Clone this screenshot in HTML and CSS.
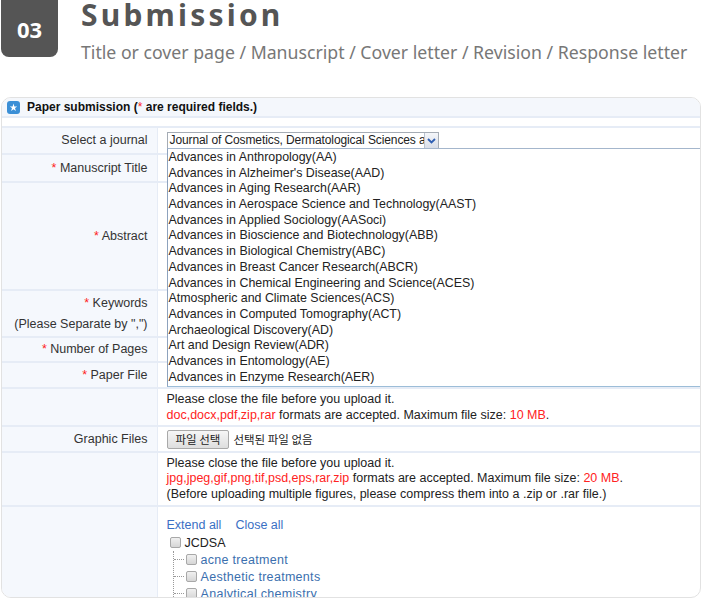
FILE: index.html
```html
<!DOCTYPE html>
<html lang="en">
<head>
    <meta charset="UTF-8">
    <title>Submission</title>
    <link rel="stylesheet" href="styles.css">
</head>
<body>
    <header class="step-head">
        <div class="step-num">03</div>
        <div class="step-text">
            <h1 class="step-title">Submission</h1>
            <p class="step-sub">Title or cover page / Manuscript / Cover letter / Revision / Response letter</p>
        </div>
    </header>

    <section class="panel">
        <div class="panel-title">
            <span class="star-icon">
                <svg width="13" height="13" viewBox="0 0 13 13">
                    <rect x="0" y="0" width="13" height="13" rx="3" fill="#3b8fd6"/>
                    <polygon points="6.5,2.6 7.4,5.4 10.3,5.4 8,7.1 8.9,9.9 6.5,8.2 4.1,9.9 5,7.1 2.7,5.4 5.6,5.4" fill="#fff"/>
                </svg>
            </span>
            <span>Paper submission (<span class="req">*</span> are required fields.)</span>
        </div>

        <table class="form-table">
            <tr class="r-journal">
                <th>Select a journal</th>
                <td>
                    <div class="select-wrap">
                        <div class="select-box">
                            <span class="select-val">Journal of Cosmetics, Dermatological Sciences and Applications(JCDSA)</span>
                            <span class="select-btn">
                                <svg width="9" height="6" viewBox="0 0 9 6"><path d="M1 1 L4.5 4.5 L8 1" fill="none" stroke="#2f5fb3" stroke-width="1.8"/></svg>
                            </span>
                        </div>
                        <!-- opened option list -->
                        <div class="select-list">
                            <div>Advances in Anthropology(AA)</div>
                            <div>Advances in Alzheimer's Disease(AAD)</div>
                            <div>Advances in Aging Research(AAR)</div>
                            <div>Advances in Aerospace Science and Technology(AAST)</div>
                            <div>Advances in Applied Sociology(AASoci)</div>
                            <div>Advances in Bioscience and Biotechnology(ABB)</div>
                            <div>Advances in Biological Chemistry(ABC)</div>
                            <div>Advances in Breast Cancer Research(ABCR)</div>
                            <div>Advances in Chemical Engineering and Science(ACES)</div>
                            <div>Atmospheric and Climate Sciences(ACS)</div>
                            <div>Advances in Computed Tomography(ACT)</div>
                            <div>Archaeological Discovery(AD)</div>
                            <div>Art and Design Review(ADR)</div>
                            <div>Advances in Entomology(AE)</div>
                            <div>Advances in Enzyme Research(AER)</div>
                        </div>
                    </div>
                </td>
            </tr>
            <tr class="r-title">
                <th><span class="req">*</span> Manuscript Title</th>
                <td></td>
            </tr>
            <tr class="r-abstract">
                <th><span class="req">*</span> Abstract</th>
                <td></td>
            </tr>
            <tr class="r-keywords">
                <th><span class="req">*</span> Keywords<br><span class="hint">(Please Separate by ",")</span></th>
                <td></td>
            </tr>
            <tr class="r-pages">
                <th><span class="req">*</span> Number of Pages</th>
                <td></td>
            </tr>
            <tr class="r-file">
                <th><span class="req">*</span> Paper File</th>
                <td></td>
            </tr>
            <tr class="r-info">
                <th></th>
                <td class="info">
                    Please close the file before you upload it.<br>
                    <span class="red">doc,docx,pdf,zip,rar</span> formats are accepted. Maximum file size: <span class="red">10 MB</span>.
                </td>
            </tr>
            <tr class="r-file">
                <th>Graphic Files</th>
                <td>
                    <span class="file-btn">파일 선택</span><span class="file-none">선택된 파일 없음</span>
                </td>
            </tr>
            <tr class="r-info2">
                <th></th>
                <td class="info">
                    Please close the file before you upload it.<br>
                    <span class="red">jpg,jpeg,gif,png,tif,psd,eps,rar,zip</span> formats are accepted. Maximum file size: <span class="red">20 MB</span>.<br>
                    (Before uploading multiple figures, please compress them into a .zip or .rar file.)
                </td>
            </tr>
            <tr class="r-tree">
                <th></th>
                <td>
                    <div class="tree-links"><a href="#">Extend all</a><a href="#">Close all</a></div>
                    <div class="tree-root"><span class="chk"></span>JCDSA</div>
                    <ul class="tree-kids">
                        <li><span class="chk"></span><a href="#">acne treatment</a></li>
                        <li><span class="chk"></span><a href="#">Aesthetic treatments</a></li>
                        <li><span class="chk"></span><a href="#">Analytical chemistry</a></li>
                        <li><span class="chk"></span><a href="#">Anti-aging</a></li>
                    </ul>
                </td>
            </tr>
        </table>
    </section>
</body>
</html>
```

FILE: styles.css
```css
* {
    margin: 0;
    padding: 0;
    box-sizing: border-box;
}

body {
    width: 702px;
    height: 599px;
    overflow: hidden;
    background: #fff;
    font-family: "Liberation Sans", Arial, sans-serif;
    color: #222;
}

/* step header */
.step-head {
    display: flex;
    gap: 23px;
    height: 97px;
}

.step-num {
    width: 57px;
    height: 57px;
    margin-left: 1px;
    background: #555;
    border-radius: 0 0 8px 8px;
    color: #fff;
    font-family: "Noto Sans", sans-serif;
    font-weight: 700;
    font-size: 22px;
    display: flex;
    align-items: center;
    justify-content: center;
    padding-top: 1px;
}

.step-title {
    font-family: "Noto Sans", sans-serif;
    font-weight: 700;
    font-size: 30px;
    letter-spacing: 3.2px;
    color: #555;
    line-height: 30px;
}

.step-sub {
    font-family: "Noto Sans", sans-serif;
    font-size: 17.7px;
    color: #777;
    margin-top: 10px;
    line-height: 24px;
}

/* form panel */
.panel {
    margin: 0 1px;
    height: 501px;
    border: 1px solid #e2e2e2;
    border-radius: 10px;
    overflow: hidden;
}

.panel-title {
    display: flex;
    align-items: center;
    height: 20px;
    padding-left: 5px;
    background: #f4f7fc;
    border-bottom: 2px solid #e6ecf6;
    font-size: 12px;
    font-weight: 700;
    color: #111;
    margin-bottom: 8px;
}

.star-icon {
    display: flex;
    margin-right: 7px;
}

.req, .red {
    color: #f22;
    font-weight: normal;
}

.form-table {
    width: 100%;
    border-collapse: collapse;
    font-size: 12.5px;
    border-top: 2px solid #e6ecf6;
}

.form-table th {
    width: 155px;
    background: #f5f8fd;
    font-weight: normal;
    text-align: right;
    padding-right: 9px;
    color: #333;
    border-bottom: 2px solid #e6ecf6;
    border-right: 1px solid #e6ecf6;
    line-height: 21px;
}

.form-table td {
    padding-left: 9px;
    border-bottom: 2px solid #e6ecf6;
    vertical-align: middle;
}

.form-table .hint {
    line-height: 21px;
}

.r-journal { height: 27px; }
.r-title { height: 28px; }
.r-abstract { height: 108px; }
.r-keywords { height: 47px; }
.r-pages { height: 25px; }
.r-file { height: 26px; }
.r-info { height: 38px; }
.r-info2 { height: 54px; }

.info {
    line-height: 16px;
    color: #222;
}

.r-info2 .info {
    line-height: 15.5px;
}

/* journal select, shown opened */
.select-wrap {
    position: relative;
    width: 272px;
}

.select-box {
    display: flex;
    height: 17px;
    border: 1px solid #a5acb5;
    background: #fff;
}

.select-val {
    flex: 1;
    overflow: hidden;
    white-space: nowrap;
    padding-left: 2px;
    line-height: 15px;
    font-size: 12px;
    letter-spacing: -0.1px;
}

.select-btn {
    width: 14px;
    display: flex;
    align-items: center;
    justify-content: center;
    background: linear-gradient(#f4f6fa, #d9dee8);
    border-left: 1px solid #b9c2d0;
}

.select-list {
    position: absolute;
    top: 16px;
    left: 0;
    width: 535px;
    background: #fff;
    border: 1px solid #8da2bd;
    border-top-color: #a4b6cc;
    border-bottom-color: #9cbdd8;
    padding: 1px 0;
    z-index: 2;
}

.select-list div {
    height: 15.7px;
    line-height: 15.7px;
    padding-left: 1px;
    white-space: nowrap;
    font-size: 12.4px;
}

/* file input look-alike */
.file-btn {
    display: inline-block;
    height: 19px;
    padding: 0 8px;
    border: 1px solid #a9a9a9;
    border-radius: 2px;
    background: linear-gradient(#f6f6f6, #dedede);
    font-family: "Noto Sans CJK KR", sans-serif;
    font-size: 11.5px;
    line-height: 17px;
    color: #222;
    vertical-align: middle;
}

.file-none {
    font-family: "Noto Sans CJK KR", sans-serif;
    font-size: 11.5px;
    margin-left: 4px;
    vertical-align: middle;
}

/* subject tree */
.r-tree td {
    vertical-align: top;
    padding-top: 10px;
}

.tree-links a {
    color: #3a6fc4;
    text-decoration: none;
    margin-right: 14px;
}

.tree-links {
    line-height: 17px;
}

.tree-root {
    display: flex;
    align-items: center;
    height: 17px;
    padding-left: 3px;
}

.chk {
    display: inline-block;
    width: 11px;
    height: 11px;
    border: 1px solid #a8a8a8;
    border-radius: 2px;
    background: linear-gradient(#f0f0f0, #d6d6d6);
    margin-right: 4px;
}

.tree-kids {
    list-style: none;
    margin-left: 6px;
    border-left: 1px dotted #999;
}

.tree-kids li {
    display: flex;
    align-items: center;
    height: 17px;
    padding-left: 12px;
    position: relative;
}

.tree-kids li::before {
    content: "";
    position: absolute;
    left: 0;
    top: 8px;
    width: 10px;
    border-top: 1px dotted #999;
}

.tree-kids a {
    color: #3b6fae;
    text-decoration: none;
    letter-spacing: 0.3px;
}
```
